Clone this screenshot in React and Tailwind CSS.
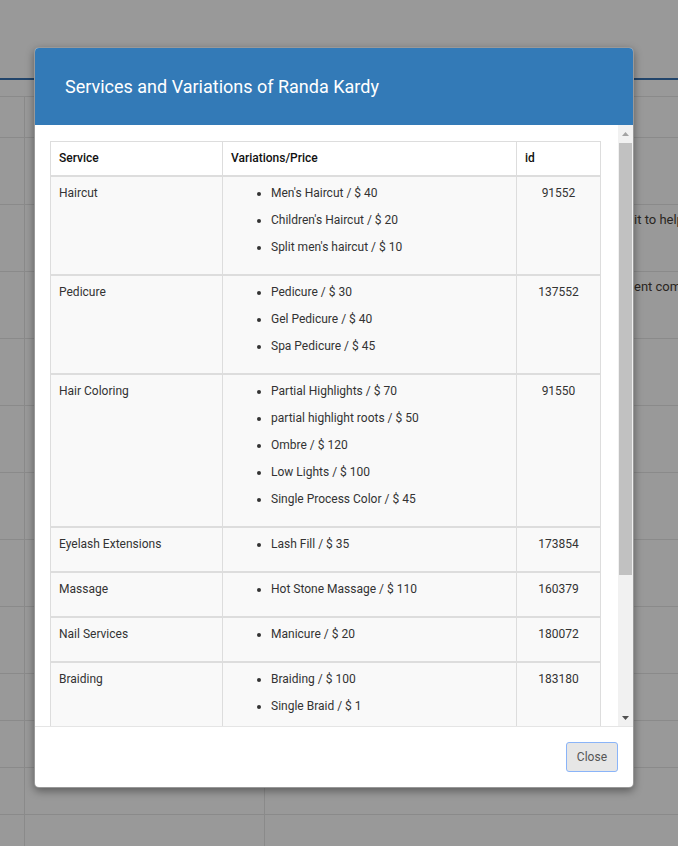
import React from 'react'

const services = [
  { name: 'Haircut', id: '91552', items: ["Men's Haircut / $ 40", "Children's Haircut / $ 20", "Split men's haircut / $ 10"] },
  { name: 'Pedicure', id: '137552', items: ['Pedicure / $ 30', 'Gel Pedicure / $ 40', 'Spa Pedicure / $ 45'] },
  {
    name: 'Hair Coloring',
    id: '91550',
    items: ['Partial Highlights / $ 70', 'partial highlight roots / $ 50', 'Ombre / $ 120', 'Low Lights / $ 100', 'Single Process Color / $ 45'],
  },
  { name: 'Eyelash Extensions', id: '173854', items: ['Lash Fill / $ 35'] },
  { name: 'Massage', id: '160379', items: ['Hot Stone Massage / $ 110'] },
  { name: 'Nail Services', id: '180072', items: ['Manicure / $ 20'] },
  { name: 'Braiding', id: '183180', items: ['Braiding / $ 100', 'Single Braid / $ 1'] },
  { name: 'Waxing', id: '183214', items: ['Eyebrow Wax / $ 15', 'Lip Wax / $ 10'] },
]

const bgRows = [
  { h: 'h-[41px]', text: '' },
  { h: 'h-[67px]', text: '' },
  { h: 'h-[67px]', text: 'it to help you' },
  { h: 'h-[67px]', text: 'ent comes in' },
  { h: 'h-[67px]', text: '' },
  { h: 'h-[67px]', text: '' },
  { h: 'h-[67px]', text: '' },
  { h: 'h-[67px]', text: '' },
  { h: 'h-[67px]', text: '' },
  { h: 'h-[47px]', text: '' },
  { h: 'h-[47px]', text: '' },
  { h: 'h-[47px]', text: '' },
  { h: 'h-[47px]', text: '' },
]

function BackgroundPage() {
  return (
    <div className="flex flex-col">
      <div className="h-[80px] border-b-2 border-[#22456b]" />
      <div className="h-[16px]" />
      {bgRows.map((row, i) => (
        <div key={i} className={`flex border-t border-[#8a8a8a] ${row.h}`}>
          <div className="w-[25px] shrink-0 border-r border-[#8a8a8a]" />
          <div className="w-[240px] shrink-0 border-r border-[#8a8a8a]" />
          <div className="min-w-0 flex-1 overflow-hidden whitespace-nowrap pl-[369px] pt-[8px] text-[13px] leading-[14px] text-[#2a2622]">
            {row.text}
          </div>
        </div>
      ))}
    </div>
  )
}

function Scrollbar() {
  return (
    <div className="flex w-[15px] shrink-0 flex-col bg-[#f1f1f1]">
      <div className="flex h-[17px] items-center justify-center">
        <svg width="7" height="4" viewBox="0 0 7 4">
          <path d="M3.5 0 L7 4 L0 4 Z" fill="#a3a3a3" />
        </svg>
      </div>
      <div className="flex-1 px-[1px] pt-[1px]">
        <div className="h-[432px] bg-[#c1c1c1]" />
      </div>
      <div className="flex h-[17px] items-center justify-center">
        <svg width="7" height="4" viewBox="0 0 7 4">
          <path d="M0 0 L7 0 L3.5 4 Z" fill="#505050" />
        </svg>
      </div>
    </div>
  )
}

export default function App() {
  return (
    <div className="relative h-[846px] w-[678px] overflow-hidden bg-[#999999] font-['Roboto',sans-serif]">
      <BackgroundPage />

      <div className="absolute left-[34px] top-[47px] flex h-[741px] w-[600px] flex-col overflow-hidden rounded-[5px] border border-black/40 bg-white shadow-[0_3px_9px_rgba(0,0,0,0.4)]">
        <div className="flex h-[77px] shrink-0 items-center bg-[#337ab7] px-[30px]">
          <h4 className="text-[18px] font-normal text-white">Services and Variations of Randa Kardy</h4>
        </div>

        <div className="flex h-[601px] shrink-0">
          <div className="min-w-0 flex-1 overflow-hidden pl-[15px] pr-[17px] pt-[16px]">
            <table className="w-full border-collapse text-[12px] leading-[17px] text-[#333]">
              <thead>
                <tr className="bg-white">
                  <th className="w-[172px] border border-b-2 border-[#ddd] p-[8px] text-left font-medium text-[#111]">Service</th>
                  <th className="w-[294px] border border-b-2 border-[#ddd] p-[8px] text-left font-medium text-[#111]">Variations/Price</th>
                  <th className="border border-b-2 border-[#ddd] p-[8px] text-left font-medium text-[#111]">id</th>
                </tr>
              </thead>
              <tbody>
                {services.map((s) => (
                  <tr key={s.id} className="bg-[#f9f9f9]">
                    <td className="border border-t-2 border-[#ddd] p-[8px] align-top">{s.name}</td>
                    <td className="border border-t-2 border-[#ddd] p-[8px] align-top">
                      <ul className="list-disc pl-[40px]">
                        {s.items.map((it) => (
                          <li key={it} className="mb-[10px]">
                            {it}
                          </li>
                        ))}
                      </ul>
                    </td>
                    <td className="border border-t-2 border-[#ddd] p-[8px] text-center align-top">{s.id}</td>
                  </tr>
                ))}
              </tbody>
            </table>
          </div>
          <Scrollbar />
        </div>

        <div className="flex flex-1 items-start justify-end border-t border-[#e5e5e5] p-[15px]">
          <button
            type="button"
            className="h-[30px] rounded-[3px] border border-[#8ab4f8] bg-[#e6e6e6] px-[10px] text-[12px] text-[#555]"
          >
            Close
          </button>
        </div>
      </div>
    </div>
  )
}
